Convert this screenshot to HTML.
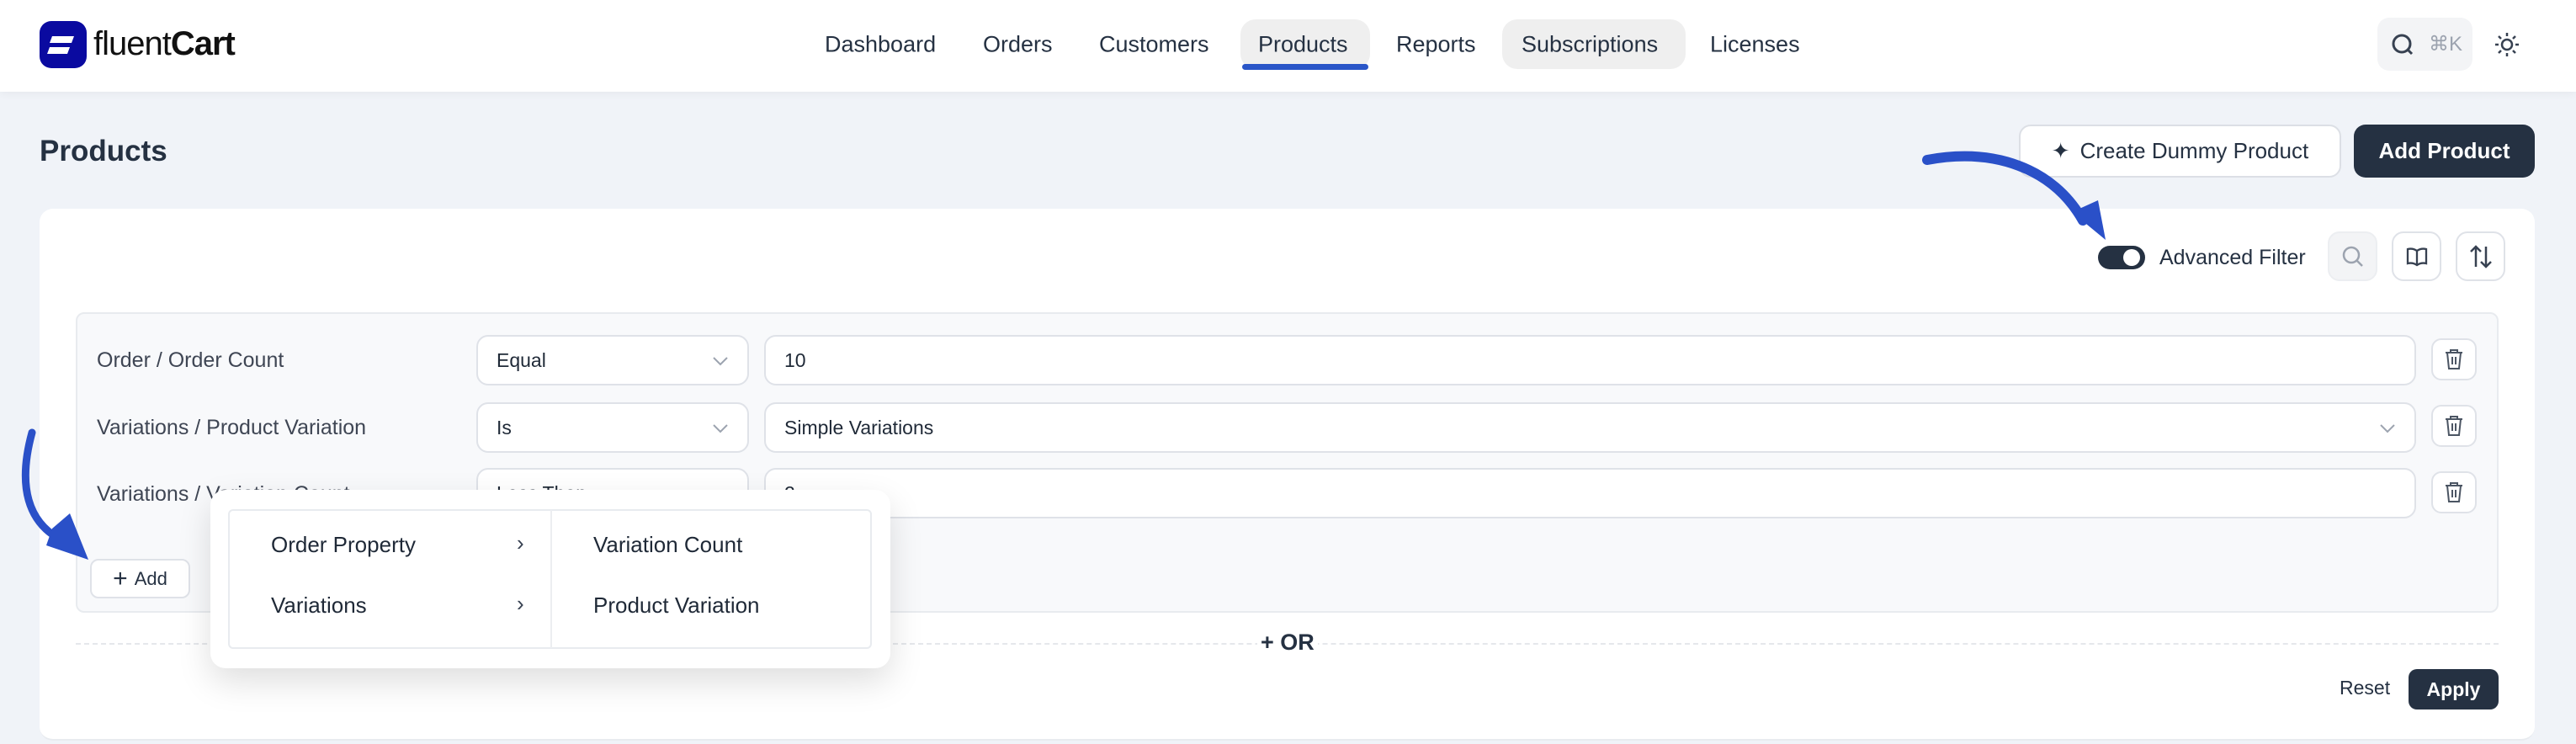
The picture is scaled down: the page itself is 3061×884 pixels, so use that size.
<!DOCTYPE html>
<html><head><meta charset="utf-8">
<style>
*{box-sizing:border-box;margin:0;padding:0}
body{width:3061px;height:884px;background:#f0f3f8;font-family:"Liberation Sans",sans-serif;color:#1f2937;position:relative;overflow:hidden}
.a{position:absolute}
.hdr{left:0;top:0;width:3061px;height:109px;background:#fff;box-shadow:0 2px 10px rgba(0,0,0,.05)}
.nav{font-size:27px;color:#253142;top:53px;transform:translateY(-50%)}
.pill{background:#efefef;border-radius:18px}
.btn{border-radius:14px;display:flex;align-items:center;justify-content:center;font-size:26px}
.card{left:47px;top:248px;width:2965px;height:632px;background:#fff;border-radius:16px;border-bottom:2px solid #e8ebef}
.panel{left:90px;top:371px;width:2879px;height:357px;background:#f8f9fb;border:2px solid #e8ebef;border-radius:10px}
.lbl{font-size:25px;color:#3f4654;left:115px}
.fld{background:#fff;border:2px solid #dfe2e8;border-radius:14px;height:60px;font-size:23px;color:#1f2937;display:flex;align-items:center;padding-left:22px}
.del{width:54px;height:50px;background:#fff;border:2px solid #dfe2e8;border-radius:12px;display:flex;align-items:center;justify-content:center}
.ib{width:59px;height:59px;border:2px solid #dfe2e8;border-radius:14px;background:#fff;display:flex;align-items:center;justify-content:center;top:275px}
</style></head><body>
<div class="a hdr"></div>
<div class="a" style="left:47px;top:25px;width:56px;height:56px;background:#0a0aa0;border-radius:14px">
<svg width="56" height="56" viewBox="0 0 56 56"><path d="M15 18h26l-3 8H12z M12 31h24l-3 8H9z" fill="#fff"/></svg></div>
<div class="a" style="left:111px;top:30px;font-size:40px;color:#111;letter-spacing:-1px"><span style="font-weight:300">fluent</span><span style="font-weight:600">Cart</span></div>

<div class="a pill" style="left:1474px;top:23px;width:154px;height:59px"></div>
<div class="a" style="left:1476px;top:76px;width:150px;height:7px;background:#2a56c8;border-radius:4px"></div>
<div class="a pill" style="left:1785px;top:23px;width:218px;height:59px"></div>
<div class="a nav" style="left:980px">Dashboard</div>
<div class="a nav" style="left:1168px">Orders</div>
<div class="a nav" style="left:1306px">Customers</div>
<div class="a nav" style="left:1495px">Products</div>
<div class="a nav" style="left:1659px">Reports</div>
<div class="a nav" style="left:1808px">Subscriptions</div>
<div class="a nav" style="left:2032px">Licenses</div>

<div class="a" style="left:2825px;top:21px;width:113px;height:63px;background:#f3f4f6;border-radius:14px"></div>
<svg class="a" style="left:2840px;top:38px" width="32" height="32" viewBox="0 0 32 32"><circle cx="14" cy="14" r="10" fill="none" stroke="#374151" stroke-width="3"/><path d="M21 21l5 5" stroke="#374151" stroke-width="3"/></svg>
<div class="a" style="left:2886px;top:38px;font-size:24px;color:#9ca3af">⌘K</div>
<svg class="a" style="left:2963px;top:37px" width="32" height="32" viewBox="0 0 32 32" fill="none" stroke="#374151" stroke-width="2.5"><circle cx="16" cy="16" r="6"/><path d="M16 2v4M16 26v4M2 16h4M26 16h4M6 6l3 3M23 23l3 3M6 26l3-3M23 9l3-3"/></svg>

<div class="a" style="left:47px;top:160px;font-size:35px;font-weight:700;color:#253142">Products</div>
<div class="a btn" style="left:2399px;top:148px;width:383px;height:63px;background:#fff;border:2px solid #dcdfe5;color:#253142"><span style="margin-right:12px">✦</span>Create Dummy Product</div>
<div class="a btn" style="left:2797px;top:148px;width:215px;height:63px;background:#253142;color:#fff;font-weight:700">Add Product</div>

<div class="a card"></div>
<div class="a" style="left:2493px;top:292px;width:56px;height:28px;background:#253142;border-radius:14px"><div class="a" style="left:30px;top:4px;width:20px;height:20px;background:#fff;border-radius:50%"></div></div>
<div class="a" style="left:2566px;top:292px;font-size:25px;color:#253142">Advanced Filter</div>
<div class="a ib" style="left:2766px;background:#f3f4f6;border-color:#eceef1"><svg width="30" height="30" viewBox="0 0 30 30" fill="none" stroke="#9ca3af" stroke-width="2.5"><circle cx="13" cy="13" r="9"/><path d="M20 20l6 6"/></svg></div>
<div class="a ib" style="left:2842px"><svg width="30" height="30" viewBox="0 0 30 30" fill="none" stroke="#374151" stroke-width="2.3"><path d="M15 8c-3-2-7-3-11-2v17c4-1 8 0 11 2 3-2 7-3 11-2V6c-4-1-8 0-11 2zM15 8v17"/></svg></div>
<div class="a ib" style="left:2918px"><svg width="30" height="32" viewBox="0 0 30 32" fill="none" stroke="#374151" stroke-width="2.5"><path d="M9 28V4M3 10l6-6 6 6M21 4v24M15 22l6 6 6-6"/></svg></div>

<div class="a panel"></div>
<div class="a lbl" style="top:414px">Order / Order Count</div>
<div class="a lbl" style="top:494px">Variations / Product Variation</div>
<div class="a lbl" style="top:573px">Variations / Variation Count</div>

<div class="a fld" style="left:566px;top:398px;width:324px">Equal<svg class="a" style="right:22px;top:23px" width="20" height="12" viewBox="0 0 20 12" fill="none" stroke="#9ca3af" stroke-width="2"><path d="M2 2l8 8 8-8"/></svg></div>
<div class="a fld" style="left:908px;top:398px;width:1963px">10</div>
<div class="a fld" style="left:566px;top:478px;width:324px">Is<svg class="a" style="right:22px;top:23px" width="20" height="12" viewBox="0 0 20 12" fill="none" stroke="#9ca3af" stroke-width="2"><path d="M2 2l8 8 8-8"/></svg></div>
<div class="a fld" style="left:908px;top:478px;width:1963px">Simple Variations<svg class="a" style="right:22px;top:23px" width="20" height="12" viewBox="0 0 20 12" fill="none" stroke="#9ca3af" stroke-width="2"><path d="M2 2l8 8 8-8"/></svg></div>
<div class="a fld" style="left:566px;top:556px;width:324px">Less Than</div>
<div class="a fld" style="left:908px;top:556px;width:1963px">2</div>
<div class="a del" style="left:2889px;top:402px"><svg width="24" height="26" viewBox="0 0 24 26" fill="none" stroke="#4b5563" stroke-width="2"><path d="M2 5h20M8 5V2h8v3M4 5l2 19h12l2-19M10 10v9M14 10v9"/></svg></div>
<div class="a del" style="left:2889px;top:481px"><svg width="24" height="26" viewBox="0 0 24 26" fill="none" stroke="#4b5563" stroke-width="2"><path d="M2 5h20M8 5V2h8v3M4 5l2 19h12l2-19M10 10v9M14 10v9"/></svg></div>
<div class="a del" style="left:2889px;top:560px"><svg width="24" height="26" viewBox="0 0 24 26" fill="none" stroke="#4b5563" stroke-width="2"><path d="M2 5h20M8 5V2h8v3M4 5l2 19h12l2-19M10 10v9M14 10v9"/></svg></div>

<div class="a btn" style="left:107px;top:664px;width:119px;height:47px;background:#fff;border:2px solid #dfe2e8;border-radius:10px;font-size:22px;color:#253142"><span style="font-size:30px;margin-right:8px;font-weight:300">+</span>Add</div>

<div class="a" style="left:90px;top:764px;width:2879px;border-top:2px dashed #e5e7eb"></div>
<div class="a" style="left:1494px;top:748px;font-size:27px;font-weight:700;color:#253142;background:#fff;padding:0 4px">+ OR</div>
<div class="a" style="left:2780px;top:804px;font-size:23px;color:#253142">Reset</div>
<div class="a btn" style="left:2862px;top:795px;width:107px;height:48px;background:#253142;color:#fff;font-weight:700;font-size:23px;border-radius:10px">Apply</div>

<div class="a" style="left:250px;top:582px;width:808px;height:212px;background:#fff;border-radius:18px;box-shadow:0 16px 40px rgba(0,0,0,.13)"></div>
<div class="a" style="left:271px;top:605px;width:765px;height:166px;border:2px solid #e8ebef;border-radius:6px"></div>
<div class="a" style="left:654px;top:606px;width:2px;height:164px;background:#eceef1"></div>
<div class="a" style="left:322px;top:632px;font-size:26px;color:#1f2937">Order Property</div>
<div class="a" style="left:322px;top:704px;font-size:26px;color:#1f2937">Variations</div>
<div class="a" style="left:614px;top:630px;font-size:26px;color:#374151">›</div>
<div class="a" style="left:614px;top:702px;font-size:26px;color:#374151">›</div>
<div class="a" style="left:705px;top:632px;font-size:26px;color:#1f2937">Variation Count</div>
<div class="a" style="left:705px;top:704px;font-size:26px;color:#1f2937">Product Variation</div>

<svg class="a" style="left:0;top:0" width="3061" height="884" viewBox="0 0 3061 884">
<path d="M2290 190 C2370 175 2440 200 2475 262" fill="none" stroke="#2a50c8" stroke-width="12" stroke-linecap="round"/>
<path d="M2462 252 L2493 238 L2502 285 Z" fill="#2a50c8"/>
<path d="M38 514 C20 580 35 620 70 640" fill="none" stroke="#2a50c8" stroke-width="9" stroke-linecap="round"/>
<path d="M62 628 L83 610 L105 665 L55 648 Z" fill="#2a50c8"/>
</svg>
</body></html>
